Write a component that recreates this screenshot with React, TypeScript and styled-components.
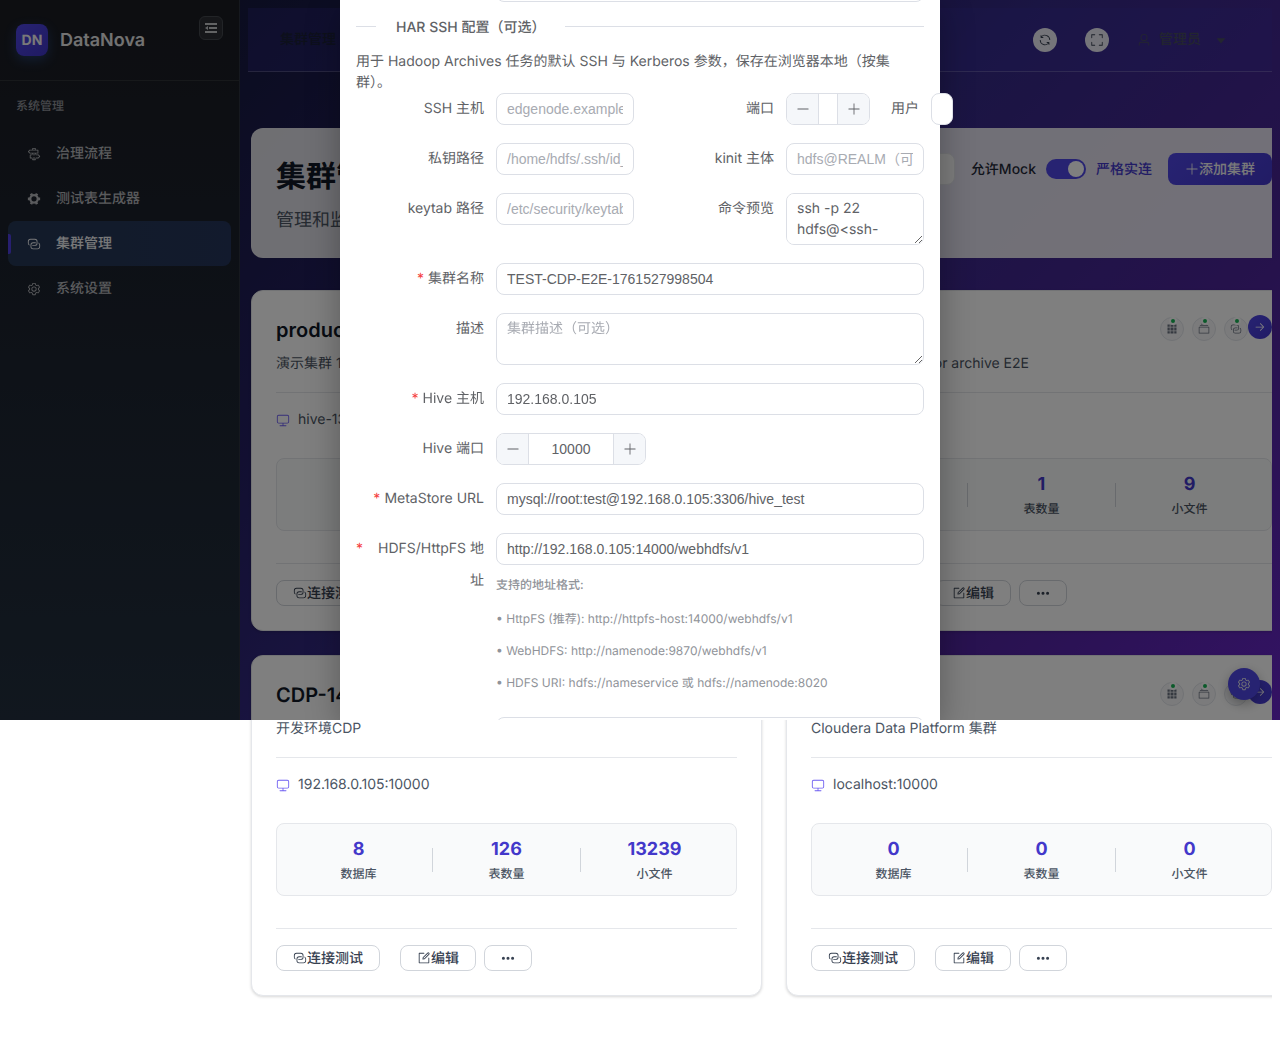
import React from "react";
import styled, { createGlobalStyle, css } from "styled-components";

const GlobalStyle = createGlobalStyle`
  *, *::before, *::after { box-sizing: border-box; }
  body {
    margin: 0;
    background: #fff;
    color: #303133;
    font-family: Inter, "Noto Sans CJK SC", sans-serif;
    font-size: 14px;
    line-height: 21px;
    text-rendering: geometricPrecision;
  }
  button, textarea { font-family: inherit; text-rendering: inherit; }
  button { cursor: pointer; padding: 0; }
  h1, h2, h3, p, ul, dl, dd { margin: 0; padding: 0; }
`;

const VIEW_HEIGHT = "720px";

/* ---------- icons ---------- */

const paths = {
  guide:
    "M640 608h-64V416h64zm0 160v160a32 32 0 0 1-32 32H416a32 32 0 0 1-32-32V768h64v128h128V768zM384 608V416h64v192zm256-352h-64V128H448v128h-64V96a32 32 0 0 1 32-32h192a32 32 0 0 1 32 32zM220.8 256l-71.232 80 71.168 80H768V256zm-14.4-64H800a32 32 0 0 1 32 32v224a32 32 0 0 1-32 32H206.4a32 32 0 0 1-23.936-10.752l-99.584-112a32 32 0 0 1 0-42.496l99.584-112A32 32 0 0 1 206.4 192m678.784 496-71.104 80H266.816V608h547.2l71.168 80zm-56.768-144H234.88a32 32 0 0 0-32 32v224a32 32 0 0 0 32 32h593.6a32 32 0 0 0 23.936-10.752l99.584-112a32 32 0 0 0 0-42.496l-99.584-112A32 32 0 0 0 828.48 544z",
  tools:
    "M764.416 254.72a351.7 351.7 0 0 1 86.336 149.184H960v192.064H850.752a351.7 351.7 0 0 1-86.336 149.312l54.72 94.72-166.272 96-54.592-94.72a352.64 352.64 0 0 1-172.48 0L371.136 936l-166.272-96 54.72-94.72a351.7 351.7 0 0 1-86.336-149.312H64v-192h109.248a351.7 351.7 0 0 1 86.336-149.312L204.8 160l166.208-96h.192l54.656 94.592a352.64 352.64 0 0 1 172.48 0L652.8 64h.128L819.2 160l-54.72 94.72zM704 499.968a192 192 0 1 0-384 0 192 192 0 0 0 384 0",
  connection:
    "M640 384v64H448a128 128 0 0 0-128 128v128a128 128 0 0 0 128 128h320a128 128 0 0 0 128-128V576a128 128 0 0 0-64-110.848V394.88c74.56 26.368 128 97.472 128 181.056v128a192 192 0 0 1-192 192H448a192 192 0 0 1-192-192V576a192 192 0 0 1 192-192zM384 640v-64h192a128 128 0 0 0 128-128V320a128 128 0 0 0-128-128H256a128 128 0 0 0-128 128v128a128 128 0 0 0 64 110.848v70.272A192.06 192.06 0 0 1 64 448V320a192 192 0 0 1 192-192h320a192 192 0 0 1 192 192v128a192 192 0 0 1-192 192z",
  setting:
    "M600.704 64a32 32 0 0 1 30.464 22.208l35.2 109.376c14.784 7.232 28.928 15.36 42.432 24.512l112.384-24.192a32 32 0 0 1 34.432 15.36L944.32 364.8a32 32 0 0 1-4.032 37.504l-77.12 85.12a357 357 0 0 1 0 49.024l77.12 85.248a32 32 0 0 1 4.032 37.504l-88.704 153.6a32 32 0 0 1-34.432 15.296L708.8 803.904c-13.44 9.088-27.648 17.28-42.368 24.512l-35.264 109.376A32 32 0 0 1 600.704 960H423.296a32 32 0 0 1-30.464-22.208L357.696 828.48a352 352 0 0 1-42.56-24.64l-112.32 24.256a32 32 0 0 1-34.432-15.36L79.68 659.2a32 32 0 0 1 4.032-37.504l77.12-85.248a357 357 0 0 1 0-48.896l-77.12-85.248A32 32 0 0 1 79.68 364.8l88.704-153.6a32 32 0 0 1 34.432-15.296l112.32 24.256c13.568-9.152 27.776-17.408 42.56-24.64l35.2-109.312A32 32 0 0 1 423.232 64H600.64zm-23.424 64H446.72l-36.352 113.088-24.512 11.968a294 294 0 0 0-34.816 20.096l-22.656 15.36-116.224-25.088-65.28 113.152 79.68 88.192-1.92 27.136a293 293 0 0 0 0 40.192l1.92 27.136-79.808 88.192 65.344 113.152 116.224-25.024 22.656 15.296a294 294 0 0 0 34.816 20.096l24.512 11.968L446.72 896h130.688l36.48-113.152 24.448-11.904a288 288 0 0 0 34.752-20.096l22.592-15.296 116.288 25.024 65.28-113.152-79.744-88.192 1.92-27.136a293 293 0 0 0 0-40.256l-1.92-27.136 79.808-88.128-65.344-113.152-116.288 24.96-22.592-15.232a288 288 0 0 0-34.752-20.096l-24.448-11.904L577.344 128zM512 320a192 192 0 1 1 0 384 192 192 0 0 1 0-384m0 64a128 128 0 1 0 0 256 128 128 0 0 0 0-256",
  fold: "M896 192H128v128h768zm0 256H384v128h512zm0 256H128v128h768zM320 384 128 512l192 128z",
  monitor:
    "M544 768v128h192a32 32 0 1 1 0 64H288a32 32 0 1 1 0-64h192V768H192A128 128 0 0 1 64 640V256a128 128 0 0 1 128-128h640a128 128 0 0 1 128 128v384a128 128 0 0 1-128 128zM192 192a64 64 0 0 0-64 64v384a64 64 0 0 0 64 64h640a64 64 0 0 0 64-64V256a64 64 0 0 0-64-64z",
  edit: "M832 512a32 32 0 1 1 64 0v352a32 32 0 0 1-32 32H160a32 32 0 0 1-32-32V160a32 32 0 0 1 32-32h352a32 32 0 0 1 0 64H192v640h640zM469.952 554.24l52.8-7.552L847.104 222.4a32 32 0 1 0-45.248-45.248L477.44 501.44l-7.552 52.8zm422.4-422.4a96 96 0 0 1 0 135.808l-331.84 331.84a32 32 0 0 1-18.112 9.088L436.8 623.68a32 32 0 0 1-36.224-36.224l15.104-105.6a32 32 0 0 1 9.024-18.112l331.904-331.84a96 96 0 0 1 135.744 0z",
  plus: "M480 480V128a32 32 0 0 1 64 0v352h352a32 32 0 1 1 0 64H544v352a32 32 0 1 1-64 0V544H128a32 32 0 0 1 0-64z",
  minus: "M128 544h768a32 32 0 1 0 0-64H128a32 32 0 0 0 0 64",
  grid: "M640 384v256H384V384zm64 0h192v256H704zm-64 512H384V704h256zm64 0V704h192v192zm-64-768v192H384V128zm64 0h192v192H704zM320 384v256H128V384zm0 512H128V704h192zm0-768v192H128V128z",
  files:
    "M128 384v448h768V384zm-32-64h832a32 32 0 0 1 32 32v512a32 32 0 0 1-32 32H96a32 32 0 0 1-32-32V352a32 32 0 0 1 32-32m64-128h704v64H160zm96-128h512v64H256z",
  right:
    "M754.752 480H160a32 32 0 1 0 0 64h594.752L521.344 777.344a32 32 0 0 0 45.312 45.312l288-288a32 32 0 0 0 0-45.312l-288-288a32 32 0 1 0-45.312 45.312z",
  refresh:
    "M771.776 794.88A384 384 0 0 1 128 512h64a320 320 0 0 0 555.712 216.448H654.72a32 32 0 1 1 0-64h149.056a32 32 0 0 1 32 32v148.928a32 32 0 1 1-64 0v-50.56zM276.288 295.616h92.992a32 32 0 0 1 0 64H220.16a32 32 0 0 1-32-32V178.56a32 32 0 0 1 64 0v50.56A384 384 0 0 1 896.128 512h-64a320 320 0 0 0-555.776-216.384z",
  fullscreen:
    "m160 96.064 192 .192a32 32 0 0 1 0 64l-192-.192V352a32 32 0 0 1-64 0V96h64zm0 831.872V928H96V672a32 32 0 1 1 64 0v191.936l192-.192a32 32 0 1 1 0 64zM864 96.064V96h64v256a32 32 0 1 1-64 0V160.064l-192 .192a32 32 0 1 1 0-64zm0 831.872-192-.192a32 32 0 0 1 0-64l192 .192V672a32 32 0 1 1 64 0v256h-64z",
  user: "M512 512a192 192 0 1 0 0-384 192 192 0 0 0 0 384m0 64a256 256 0 1 1 0-512 256 256 0 0 1 0 512m320 320v-96a96 96 0 0 0-96-96H288a96 96 0 0 0-96 96v96a32 32 0 1 1-64 0v-96a160 160 0 0 1 160-160h448a160 160 0 0 1 160 160v96a32 32 0 1 1-64 0",
  caret: "m192 384 320 384 320-384z",
  more: "M176 416a112 112 0 1 1 0 224 112 112 0 0 1 0-224m336 0a112 112 0 1 1 0 224 112 112 0 0 1 0-224m336 0a112 112 0 1 1 0 224 112 112 0 0 1 0-224",
};
type IconName = keyof typeof paths;

const IconSvg = styled.svg<{ $size: number }>`
  display: block;
  flex: none;
  width: ${(p) => p.$size}px;
  height: ${(p) => p.$size}px;
  fill: currentColor;
`;
const Icon = ({ name, size = 14 }: { name: IconName; size?: number }) => (
  <IconSvg $size={size} viewBox="0 0 1024 1024" aria-hidden="true">
    <path d={paths[name]} />
  </IconSvg>
);

/* ---------- shell ---------- */

const Shell = styled.div`
  position: relative;
  display: flex;
  align-items: flex-start;
  background: linear-gradient(
      135deg,
      #10162c 0%,
      #16193f 12%,
      #241f62 35%,
      #352a86 52%,
      #4c2498 77%,
      #6826c8 100%
    )
    0 0 / 100% ${VIEW_HEIGHT} no-repeat;
`;

const Sidebar = styled.aside`
  flex: none;
  width: 240px;
  height: ${VIEW_HEIGHT};
  border-right: 1px solid #2c333f;
  background: linear-gradient(180deg, #1a1c22 0%, #1b212c 35%, #222f3e 100%);
`;

const Brand = styled.div`
  display: flex;
  align-items: flex-start;
  height: 81px;
  padding: 16px;
  border-bottom: 1px solid #2f3237;
`;

const Logo = styled.span`
  width: 32px;
  height: 32px;
  margin-top: 8px;
  border-radius: 8px;
  background: linear-gradient(135deg, #4f46e5, #3f35c4);
  box-shadow: 0 4px 12px rgba(59, 130, 246, 0.3);
  color: #f2f2f2;
  font-size: 14px;
  font-weight: 700;
  line-height: 34px;
  text-align: center;
`;

const BrandName = styled.strong`
  flex: 1;
  margin: 8px 0 0 12px;
  color: #e5e5e5;
  font-size: 18px;
  font-weight: 600;
  line-height: 34px;
`;

const FoldButton = styled.button`
  display: grid;
  place-items: center;
  width: 24px;
  height: 24px;
  border: 1px solid #45484e;
  border-radius: 6px;
  background: #2c2f35;
  color: #c4c6c9;
`;

const NavTitle = styled.h3`
  padding: 16px;
  color: #8f9299;
  font-size: 12px;
  font-weight: 500;
  line-height: 18px;
`;

const NavItem = styled.a<{ $active?: boolean }>`
  position: relative;
  display: flex;
  align-items: center;
  gap: 15px;
  height: 45px;
  margin: 0 8px;
  padding: 0 19px;
  border-radius: 8px;
  color: #b4b6ba;
  font-weight: 500;
  text-decoration: none;
  ${(p) =>
    p.$active &&
    css`
      background: linear-gradient(90deg, #253754, #24355a);
      color: #f1f2f4;
      &::before {
        content: "";
        position: absolute;
        left: 0;
        top: 13px;
        width: 3px;
        height: 20px;
        border-radius: 0 2px 2px 0;
        background: #4f3fe0;
      }
    `}
`;

const Main = styled.main`
  flex: 1;
  min-width: 0;
  padding-left: 8px;
  margin: 8px 8px 0 0;
  overflow-x: clip;
`;

const TopBar = styled.header`
  display: flex;
  align-items: center;
  height: 64px;
  padding: 0 44px 0 32px;
  border-bottom: 1px solid rgba(255, 255, 255, 0.2);
  background: rgba(55, 48, 163, 0.25);
  color: #464c5e;
  font-weight: 500;
`;

const Crumb = styled.span`
  flex: 1;
  color: #1a2036;
`;

const RoundButton = styled.button`
  display: grid;
  place-items: center;
  width: 24px;
  height: 24px;
  margin-right: 28px;
  border: 0;
  border-radius: 50%;
  background: rgba(255, 255, 255, 0.9);
  color: #374151;
`;

const UserMenu = styled.button`
  display: flex;
  align-items: center;
  gap: 8px;
  border: 0;
  background: none;
  color: inherit;
  font-size: 14px;
  font-weight: 500;
  line-height: 21px;
  & > :last-child {
    margin-left: 5px;
  }
`;

const Content = styled.div`
  margin: 56px -25px 0 3px;
`;

const PageHead = styled.section`
  display: flex;
  justify-content: space-between;
  align-items: flex-start;
  margin-bottom: 32px;
  padding: 24px 24px 23px;
  border: 1px solid rgba(255, 255, 255, 0.05);
  border-radius: 12px;
  background: rgba(255, 255, 255, 0.86);
`;

const PageTitle = styled.h1`
  color: #111827;
  font-size: 30px;
  font-weight: 700;
  line-height: 48px;
`;

const PageNote = styled.p`
  margin-top: 6px;
  color: #4b5563;
  font-size: 18px;
  line-height: 27px;
`;

const HeadTools = styled.div`
  display: flex;
  align-items: center;
  gap: 16px;
  height: 32px;
  color: #1f2937;
  font-weight: 500;
`;

const Search = styled.input`
  width: 240px;
  height: 32px;
  padding: 0 11px;
  border: 1px solid #e5e7eb;
  border-radius: 8px;
  background: #fafafa;
`;

const SwitchGroup = styled.label`
  display: flex;
  align-items: center;
  gap: 10px;
  em {
    color: #4338ca;
    font-style: normal;
  }
`;

const Switch = styled.input`
  appearance: none;
  display: flex;
  justify-content: flex-end;
  width: 40px;
  height: 20px;
  margin: 0;
  padding: 2px;
  border-radius: 10px;
  background: #4f46e5;
  &::before {
    content: "";
    width: 16px;
    height: 16px;
    border-radius: 50%;
    background: #fff;
  }
`;

const PrimaryButton = styled.button`
  display: flex;
  align-items: center;
  height: 32px;
  padding: 0 17px;
  border: 0;
  border-radius: 8px;
  background: linear-gradient(135deg, #4f46e5, #4338ca);
  color: #f4f4f5;
  font-size: 14px;
  font-weight: 500;
`;

const CardGrid = styled.div`
  display: grid;
  grid-template-columns: repeat(2, minmax(0, 1fr));
  gap: 24px;
  padding-bottom: 64px;
`;

const Card = styled.article`
  padding: 24px;
  border: 1px solid #e5e7eb;
  border-radius: 12px;
  background: #fff;
  box-shadow: 0 1px 3px rgba(0, 0, 0, 0.16);
`;

const CardHead = styled.div`
  display: flex;
  height: 78px;
  border-bottom: 1px solid #e5e7eb;
`;

const CardText = styled.div`
  flex: 1;
  min-width: 0;
`;

const CardTitle = styled.h2`
  overflow: hidden;
  color: #111827;
  font-size: 20px;
  font-weight: 600;
  line-height: 30px;
  white-space: nowrap;
`;

const CardNote = styled.p`
  margin-top: 8px;
  color: #4b5563;
`;

const Services = styled.div`
  display: flex;
  gap: 8px;
  padding-top: 2px;
`;

const Service = styled.span`
  position: relative;
  display: grid;
  place-items: center;
  width: 24px;
  height: 24px;
  border: 1px solid #e2e5ea;
  border-radius: 50%;
  background: #f6f7f9;
  color: #6b7280;
  &::after {
    content: "";
    position: absolute;
    top: -1px;
    left: 8px;
    width: 8px;
    height: 8px;
    border: 2px solid #fff;
    border-radius: 50%;
    background: #16b455;
  }
`;

const OpenButton = styled.button`
  display: grid;
  place-items: center;
  width: 24px;
  height: 24px;
  border: 0;
  border-radius: 50%;
  background: linear-gradient(135deg, #4f46e5, #4338ca);
  color: #fff;
`;

const Host = styled.p`
  display: flex;
  align-items: center;
  gap: 8px;
  margin: 16px 0 28px;
  color: #4b5563;
  svg {
    color: #6d5df1;
  }
`;

const Stats = styled.dl`
  display: flex;
  align-items: center;
  height: 73px;
  padding: 0 8px;
  border: 1px solid #e5e7eb;
  border-radius: 8px;
  background: #f9fafb;
`;

const Stat = styled.div`
  display: flex;
  flex: 1;
  flex-direction: column-reverse;
  gap: 2px;
  text-align: center;
  dt {
    color: #4b5563;
    font-size: 12px;
    font-weight: 500;
    line-height: 18px;
  }
  dd {
    color: #4338ca;
    font-size: 18px;
    font-weight: 700;
    line-height: 27px;
  }
`;

const StatRule = styled.div`
  width: 1px;
  height: 24px;
  background: #d1d5db;
`;

const CardActions = styled.div`
  display: flex;
  gap: 8px;
  margin-top: 32px;
  padding-top: 16px;
  border-top: 1px solid #e5e7eb;
`;

const SmallButton = styled.button<{ $wide?: boolean }>`
  display: flex;
  align-items: center;
  height: 26px;
  margin-right: ${(p) => (p.$wide ? 12 : 0)}px;
  padding: 0 16px;
  border: 1px solid #d1d5db;
  border-radius: 8px;
  background: #fff;
  color: #374151;
  font-size: 14px;
  font-weight: 500;
`;

const FloatButton = styled.button`
  position: absolute;
  right: 20px;
  top: calc(${VIEW_HEIGHT} - 52px);
  display: grid;
  place-items: center;
  width: 32px;
  height: 32px;
  border: 0;
  border-radius: 50%;
  background: #4f46e5;
  box-shadow: 0 4px 12px rgba(0, 0, 0, 0.3);
  color: #e5e7eb;
`;

/* ---------- dialog ---------- */

const Overlay = styled.div`
  position: absolute;
  top: 0;
  left: 0;
  right: 0;
  height: ${VIEW_HEIGHT};
  overflow: hidden;
  background: rgba(0, 0, 0, 0.5);
`;

const Dialog = styled.section`
  display: flow-root;
  width: 600px;
  height: 100%;
  margin: 0 auto;
  padding: 0 16px;
  background: #fff;
  box-shadow: 0 8px 32px rgba(0, 0, 0, 0.3);
  color: #606266;
`;

const Form = styled.form`
  /* scrolled so that only the edge of the first field is left in view */
  margin-top: -30px;
`;

const Divider = styled.div`
  display: flex;
  align-items: center;
  margin: -6px 0 13px;
  &::before,
  &::after {
    content: "";
    height: 1px;
    background: #dcdfe6;
  }
  &::before {
    width: 20px;
  }
  &::after {
    flex: 1;
  }
  h3 {
    padding: 3px 20px 0;
    font-size: 14px;
    font-weight: 500;
    line-height: 21px;
  }
`;

const FieldRow = styled.div`
  display: grid;
  grid-template-columns: repeat(4, minmax(0, 1fr));
  column-gap: 12px;
`;

const Field = styled.div<{ $span?: number }>`
  grid-column: span ${(p) => p.$span ?? 4};
  display: flex;
  align-items: flex-start;
  margin-bottom: 18px;
`;

const Label = styled.label<{ $required?: boolean }>`
  display: flex;
  flex: none;
  justify-content: flex-end;
  width: 140px;
  padding-right: 12px;
  line-height: 32px;
  text-align: right;
  ${(p) =>
    p.$required &&
    css`
      &::before {
        content: "*";
        margin-right: 4px;
        color: #f53f3f;
      }
    `}
`;

const FieldBody = styled.div`
  flex: 1;
  min-width: 22px;
`;

const control = css`
  display: block;
  width: 100%;
  border: 1px solid #dcdfe6;
  border-radius: 8px;
  outline: 0;
  background: #fff;
  color: #606266;
  font-size: 14px;
  &::placeholder {
    color: #a8abb2;
    opacity: 1;
  }
`;

const TextInput = styled.input`
  ${control}
  height: 32px;
  padding: 0 10px;
  font-family: "Liberation Sans", "Noto Sans CJK SC", sans-serif;
`;

const TextArea = styled.textarea`
  ${control}
  height: 52px;
  padding: 4px 10px;
  line-height: 21px;
  resize: vertical;
`;

const Stepper = styled.div<{ $width: number }>`
  display: flex;
  flex: none;
  width: ${(p) => p.$width}px;
  height: 32px;
  border: 1px solid #dcdfe6;
  border-radius: 8px;
  overflow: hidden;
  background: #fff;
  input {
    flex: 1;
    width: 0;
    min-width: 0;
    padding: 0;
    border: 0;
    outline: 0;
    color: #606266;
    font-family: "Liberation Sans", sans-serif;
    font-size: 14px;
    text-align: center;
  }
  button {
    display: grid;
    flex: none;
    place-items: center;
    width: 32px;
    border: 0 solid #dcdfe6;
    background: #f5f7fa;
    color: #606266;
  }
  button:first-child {
    border-right-width: 1px;
  }
  button:last-child {
    border-left-width: 1px;
  }
`;

const Help = styled.div`
  margin-top: 4px;
  color: #909399;
  font-size: 12px;
  line-height: 32px;
  strong {
    display: block;
    margin-bottom: 2px;
    font-weight: 500;
  }
`;

/* ---------- content ---------- */

const navItems: { icon: IconName; text: string; active?: boolean }[] = [
  { icon: "guide", text: "治理流程" },
  { icon: "tools", text: "测试表生成器" },
  { icon: "connection", text: "集群管理", active: true },
  { icon: "setting", text: "系统设置" },
];

const clusters = [
  { name: "production-1", note: "演示集群 1", host: "hive-13:10000", stats: [4, 36, 120] },
  { name: "TEST-CDP", note: "CDP test clusters for archive E2E", host: "localhost:10000", stats: [1, 1, 9] },
  { name: "CDP-14", note: "开发环境CDP", host: "192.168.0.105:10000", stats: [8, 126, 13239] },
  { name: "CDP", note: "Cloudera Data Platform 集群", host: "localhost:10000", stats: [0, 0, 0] },
];
const statNames = ["数据库", "表数量", "小文件"];

const ClusterCard = ({ name, note, host, stats }: (typeof clusters)[number]) => (
  <Card>
    <CardHead>
      <CardText>
        <CardTitle>{name}</CardTitle>
        <CardNote>{note}</CardNote>
      </CardText>
      <Services>
        <Service><Icon name="grid" size={12} /></Service>
        <Service><Icon name="files" size={12} /></Service>
        <Service><Icon name="connection" size={12} /></Service>
      </Services>
      <OpenButton type="button" aria-label="进入集群"><Icon name="right" size={12} /></OpenButton>
    </CardHead>
    <Host><Icon name="monitor" />{host}</Host>
    <Stats>
      {stats.map((value, i) => (
        <React.Fragment key={statNames[i]}>
          {i > 0 && <StatRule />}
          <Stat>
            <dt>{statNames[i]}</dt>
            <dd>{value}</dd>
          </Stat>
        </React.Fragment>
      ))}
    </Stats>
    <CardActions>
      <SmallButton type="button" $wide><Icon name="connection" />连接测试</SmallButton>
      <SmallButton type="button"><Icon name="edit" />编辑</SmallButton>
      <SmallButton type="button" aria-label="更多"><Icon name="more" /></SmallButton>
    </CardActions>
  </Card>
);

type TextFieldProps = {
  id: string;
  label: string;
  span?: number;
  required?: boolean;
  value?: string;
  placeholder?: string;
  area?: boolean;
  children?: React.ReactNode;
};
const TextField = ({ id, label, span, required, value, placeholder, area, children }: TextFieldProps) => (
  <Field $span={span}>
    <Label htmlFor={id} $required={required}>{label}</Label>
    <FieldBody>
      {area ? (
        <TextArea id={id} defaultValue={value} placeholder={placeholder} spellCheck={false} />
      ) : (
        <TextInput id={id} defaultValue={value} placeholder={placeholder} />
      )}
      {children}
    </FieldBody>
  </Field>
);

const NumberField = ({ id, label, span, value, width }: { id: string; label: string; span?: number; value?: string; width: number }) => (
  <Field $span={span}>
    <Label htmlFor={id}>{label}</Label>
    <Stepper $width={width}>
      <button type="button" aria-label="减少"><Icon name="minus" /></button>
      <input id={id} inputMode="numeric" defaultValue={value} />
      <button type="button" aria-label="增加"><Icon name="plus" /></button>
    </Stepper>
  </Field>
);

export default function App() {
  return (
    <>
      <GlobalStyle />
      <Shell>
        <Sidebar>
          <Brand>
            <Logo>DN</Logo>
            <BrandName>DataNova</BrandName>
            <FoldButton type="button" aria-label="收起菜单"><Icon name="fold" size={16} /></FoldButton>
          </Brand>
          <NavTitle>系统管理</NavTitle>
          <nav>
            {navItems.map((item) => (
              <NavItem key={item.text} href="#" $active={item.active}>
                <Icon name={item.icon} />
                {item.text}
              </NavItem>
            ))}
          </nav>
        </Sidebar>

        <Main>
          <TopBar>
            <Crumb>集群管理</Crumb>
            <RoundButton type="button" aria-label="刷新"><Icon name="refresh" /></RoundButton>
            <RoundButton type="button" aria-label="全屏"><Icon name="fullscreen" /></RoundButton>
            <UserMenu type="button">
              <Icon name="user" />
              管理员
              <Icon name="caret" />
            </UserMenu>
          </TopBar>

          <Content>
            <PageHead>
              <div>
                <PageTitle>集群管理</PageTitle>
                <PageNote>管理和监控大数据集群</PageNote>
              </div>
              <HeadTools>
                <Search aria-label="搜索集群" />
                <SwitchGroup>
                  允许Mock
                  <Switch type="checkbox" defaultChecked />
                  <em>严格实连</em>
                </SwitchGroup>
                <PrimaryButton type="button"><Icon name="plus" />添加集群</PrimaryButton>
              </HeadTools>
            </PageHead>
            <CardGrid>
              {clusters.map((c) => (
                <ClusterCard key={c.name} {...c} />
              ))}
            </CardGrid>
          </Content>
        </Main>

        <FloatButton type="button" aria-label="设置"><Icon name="setting" /></FloatButton>

        <Overlay>
          <Dialog role="dialog" aria-label="编辑集群">
            <Form>
              <TextField id="preset" label="" />
              <Divider><h3>HAR SSH 配置（可选）</h3></Divider>
              <p>用于 Hadoop Archives 任务的默认 SSH 与 Kerberos 参数，保存在浏览器本地（按集群）。</p>
              <FieldRow>
                <TextField id="ssh-host" label="SSH 主机" span={2} placeholder="edgenode.example.com" />
                <NumberField id="ssh-port" label="端口" span={1} width={84} />
                <TextField id="ssh-user" label="用户" span={1} />
                <TextField id="ssh-key" label="私钥路径" span={2} placeholder="/home/hdfs/.ssh/id_rsa" />
                <TextField id="kinit" label="kinit 主体" span={2} placeholder="hdfs@REALM（可选）" />
                <TextField id="keytab" label="keytab 路径" span={2} placeholder="/etc/security/keytabs/hdfs.keytab" />
                <TextField id="preview" label="命令预览" span={2} area value="ssh -p 22 hdfs@<ssh-host>" />
              </FieldRow>
              <TextField id="name" label="集群名称" required value="TEST-CDP-E2E-1761527998504" />
              <TextField id="desc" label="描述" area placeholder="集群描述（可选）" />
              <TextField id="hive-host" label="Hive 主机" required value="192.168.0.105" />
              <NumberField id="hive-port" label="Hive 端口" value="10000" width={150} />
              <TextField id="metastore" label="MetaStore URL" required value="mysql://root:test@192.168.0.105:3306/hive_test" />
              <TextField id="hdfs-url" label="HDFS/HttpFS 地址" required value="http://192.168.0.105:14000/webhdfs/v1">
                <Help>
                  <strong>支持的地址格式:</strong>
                  <p>• HttpFS (推荐): http://httpfs-host:14000/webhdfs/v1</p>
                  <p>• WebHDFS: http://namenode:9870/webhdfs/v1</p>
                  <p>• HDFS URI: hdfs://nameservice 或 hdfs://namenode:8020</p>
                </Help>
              </TextField>
              <TextField id="hdfs-user" label="HDFS 用户" value="hdfs" />
            </Form>
          </Dialog>
        </Overlay>
      </Shell>
    </>
  );
}
